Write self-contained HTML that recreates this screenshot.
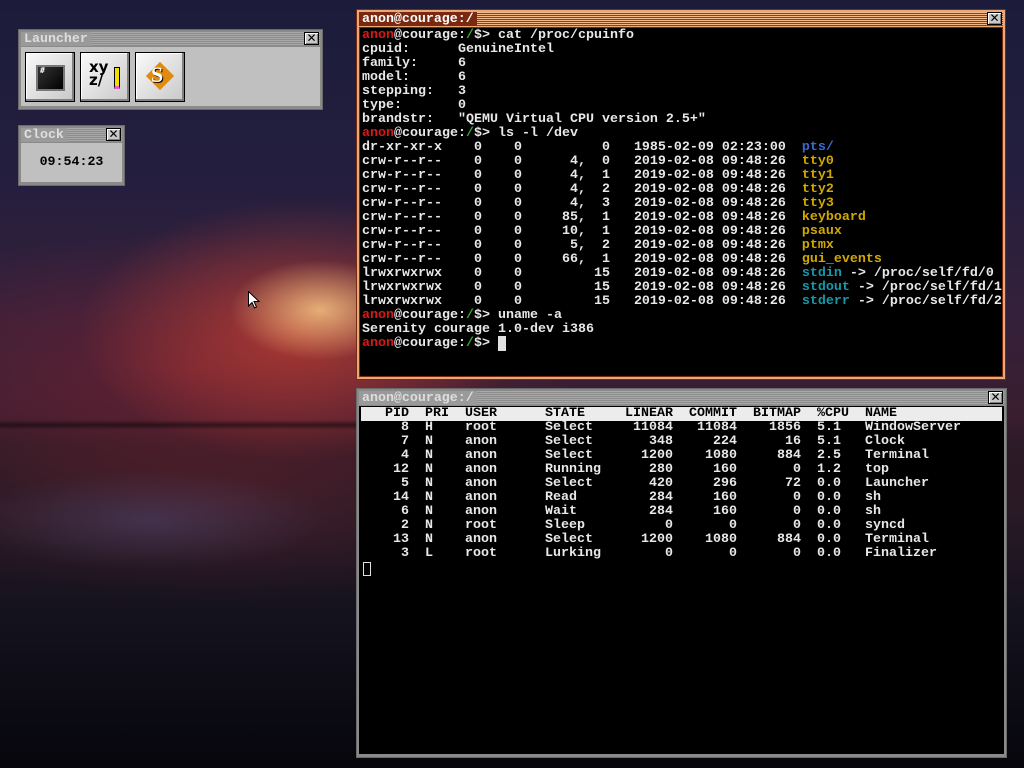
<!DOCTYPE html>
<html><head><meta charset="utf-8"><style>
*{margin:0;padding:0;box-sizing:border-box}
body{width:1024px;height:768px;overflow:hidden;position:relative;font-family:"Liberation Mono","DejaVu Sans Mono",monospace;
background:
radial-gradient(ellipse 90px 50px at 320px 310px,rgba(255,215,140,.75),rgba(255,120,60,0) 100%),
radial-gradient(ellipse 220px 130px at 300px 330px,rgba(220,70,50,.65),rgba(200,40,40,0) 100%),
radial-gradient(ellipse 380px 140px at 200px 370px,rgba(140,35,50,.5),rgba(0,0,0,0) 100%),
radial-gradient(ellipse 180px 50px at 150px 520px,rgba(90,100,160,.3),rgba(0,0,0,0) 100%),
radial-gradient(ellipse 330px 100px at 220px 500px,rgba(100,35,45,.4),rgba(0,0,0,0) 100%),
linear-gradient(180deg,#1c1c3a 0%,#241e3e 22%,#33203a 40%,#3a1e30 54%,#2c1a26 58%,#2a1a26 66%,#14121e 80%,#06060c 100%);}
.horizon{position:absolute;left:0;top:420px;width:360px;height:10px;background:linear-gradient(180deg,rgba(10,5,10,0),rgba(10,5,10,.55),rgba(30,20,30,0))}
.win{position:absolute}
.tb{position:absolute;height:14px;font-size:13.3px;line-height:14px;font-weight:bold;white-space:pre}
.close{position:absolute;width:15px;height:13px;background:#c8c8c8;border:1px solid #000;box-shadow:inset 1px 1px #fff,inset -1px -1px #808080;font:bold 12px/11px "DejaVu Sans",sans-serif;text-align:center;color:#000}
pre{font-family:"Liberation Mono","DejaVu Sans Mono",monospace;font-size:13.33px;line-height:14px;font-weight:bold;color:#e8e8e8}
.r{color:#d81818}.g{color:#30b030}.b{color:#3a6ad0}.y{color:#d0a800}.c{color:#1898a8}
.btn{position:absolute;top:52px;width:50px;height:50px;background:linear-gradient(135deg,#fafafa,#c8c8c8);border:1px solid #000;box-shadow:inset -2px -2px #808080,inset 1px 1px #fff}
.row{display:grid;grid-template-columns:48px 56px 80px 80px 48px 64px 64px 64px 1fr;height:14px;line-height:14px;font-size:13.33px;font-weight:bold;white-space:pre;color:#e8e8e8}
.row span:nth-child(1),.row span:nth-child(5),.row span:nth-child(6),.row span:nth-child(7){text-align:right}
.row span:nth-child(2),.row span:nth-child(8){padding-left:16px}
</style></head><body>
<div class="horizon"></div>

<!-- Launcher -->
<div class="win" style="left:18px;top:29px;width:305px;height:81px;background:#8a8a8a;border:1px solid #6a6a6a">
 <div style="position:absolute;left:2px;top:2px;right:2px;height:14px;background:repeating-linear-gradient(180deg,#a8a8a8 0 1px,#8c8c8c 1px 2px)"></div>
 <div class="tb" style="left:2px;top:2px;padding:0 3px;background:#9a9a9a;color:#dedede">Launcher</div>
 <div class="close" style="left:285px;top:2px">✕</div>
 <div style="position:absolute;left:2px;top:17px;right:2px;bottom:3px;background:#c0c0c0"></div>
</div>
<div class="btn" style="left:25px"><div style="position:absolute;left:10px;top:12px;width:29px;height:26px;background:linear-gradient(135deg,#333,#000);border:2px solid #777"><span style="position:absolute;left:2px;top:-1px;color:#fff;font:bold 8px monospace">#</span></div></div>
<div class="btn" style="left:80px"><span style="position:absolute;left:8px;top:8px;font:bold 15px/13px 'DejaVu Sans',sans-serif;color:#000">xy<br>z/</span><div style="position:absolute;left:33px;top:14px;width:6px;height:22px;background:#f0e000;border:1px solid #000;border-bottom:3px solid #e060d0"></div></div>
<div class="btn" style="left:135px"><div style="position:absolute;left:14px;top:13px;width:20px;height:20px;background:#e08a10;transform:rotate(45deg)"></div><span style="position:absolute;left:15px;top:9px;font:bold 22px/26px 'Liberation Serif',serif;color:#fff;text-shadow:1px 1px #000">S</span></div>

<!-- Clock -->
<div class="win" style="left:18px;top:125px;width:107px;height:61px;background:#8a8a8a;border:1px solid #6a6a6a">
 <div style="position:absolute;left:2px;top:2px;right:2px;height:14px;background:repeating-linear-gradient(180deg,#a8a8a8 0 1px,#8c8c8c 1px 2px)"></div>
 <div class="tb" style="left:2px;top:2px;padding:0 3px;background:#9a9a9a;color:#dedede">Clock</div>
 <div class="close" style="left:87px;top:2px">✕</div>
 <div style="position:absolute;left:2px;top:17px;right:2px;bottom:3px;background:#c0c0c0;text-align:center;font-size:13.3px;line-height:38px;font-weight:bold;color:#000">09:54:23</div>
</div>

<!-- Terminal -->
<div class="win" style="left:356px;top:9px;width:650px;height:371px;background:#e8a878;border:1px solid #7a2a10">
 <div style="position:absolute;left:2px;top:2px;right:2px;height:14px;background:repeating-linear-gradient(180deg,#f0b888 0 1px,#a03818 1px 2px)"></div>
 <div class="tb" style="left:2px;top:2px;padding:0 3px;background:#7a2810;color:#fff">anon@courage:/</div>
 <div class="close" style="left:630px;top:2px">✕</div>
 <div style="position:absolute;left:2px;top:17px;right:2px;bottom:2px;background:#000;border:1px solid #7a2a10;overflow:hidden">
<pre style="position:absolute;left:2px;top:1px"><span class="r">anon</span>@courage:<span class="g">/</span>$&gt; cat /proc/cpuinfo
cpuid:      GenuineIntel
family:     6
model:      6
stepping:   3
type:       0
brandstr:   "QEMU Virtual CPU version 2.5+"
<span class="r">anon</span>@courage:<span class="g">/</span>$&gt; ls -l /dev
dr-xr-xr-x    0    0          0   1985-02-09 02:23:00  <span class="b">pts/</span>
crw-r--r--    0    0      4,  0   2019-02-08 09:48:26  <span class="y">tty0</span>
crw-r--r--    0    0      4,  1   2019-02-08 09:48:26  <span class="y">tty1</span>
crw-r--r--    0    0      4,  2   2019-02-08 09:48:26  <span class="y">tty2</span>
crw-r--r--    0    0      4,  3   2019-02-08 09:48:26  <span class="y">tty3</span>
crw-r--r--    0    0     85,  1   2019-02-08 09:48:26  <span class="y">keyboard</span>
crw-r--r--    0    0     10,  1   2019-02-08 09:48:26  <span class="y">psaux</span>
crw-r--r--    0    0      5,  2   2019-02-08 09:48:26  <span class="y">ptmx</span>
crw-r--r--    0    0     66,  1   2019-02-08 09:48:26  <span class="y">gui_events</span>
lrwxrwxrwx    0    0         15   2019-02-08 09:48:26  <span class="c">stdin</span> -&gt; /proc/self/fd/0
lrwxrwxrwx    0    0         15   2019-02-08 09:48:26  <span class="c">stdout</span> -&gt; /proc/self/fd/1
lrwxrwxrwx    0    0         15   2019-02-08 09:48:26  <span class="c">stderr</span> -&gt; /proc/self/fd/2
<span class="r">anon</span>@courage:<span class="g">/</span>$&gt; uname -a
Serenity courage 1.0-dev i386
<span class="r">anon</span>@courage:<span class="g">/</span>$&gt; <span style="background:#e0e0e0">&nbsp;</span></pre>
 </div>
</div>

<!-- top -->
<div class="win" style="left:356px;top:388px;width:651px;height:370px;background:#8a8a8a;border:1px solid #6a6a6a">
 <div style="position:absolute;left:2px;top:2px;right:2px;height:14px;background:repeating-linear-gradient(180deg,#a8a8a8 0 1px,#8c8c8c 1px 2px)"></div>
 <div class="tb" style="left:2px;top:2px;padding:0 3px;background:#9a9a9a;color:#dedede">anon@courage:/</div>
 <div class="close" style="left:631px;top:2px">✕</div>
 <div style="position:absolute;left:2px;top:17px;right:2px;bottom:3px;background:#000;overflow:hidden">
  <div style="position:absolute;left:2px;top:1px;width:641px">
   <div class="row" style="background:#ececec;color:#000"><span>PID</span><span>PRI</span><span>USER</span><span>STATE</span><span>LINEAR</span><span>COMMIT</span><span>BITMAP</span><span>%CPU</span><span>NAME</span></div>
   <div class="row"><span>8</span><span>H</span><span>root</span><span>Select</span><span>11084</span><span>11084</span><span>1856</span><span>5.1</span><span>WindowServer</span></div>
   <div class="row"><span>7</span><span>N</span><span>anon</span><span>Select</span><span>348</span><span>224</span><span>16</span><span>5.1</span><span>Clock</span></div>
   <div class="row"><span>4</span><span>N</span><span>anon</span><span>Select</span><span>1200</span><span>1080</span><span>884</span><span>2.5</span><span>Terminal</span></div>
   <div class="row"><span>12</span><span>N</span><span>anon</span><span>Running</span><span>280</span><span>160</span><span>0</span><span>1.2</span><span>top</span></div>
   <div class="row"><span>5</span><span>N</span><span>anon</span><span>Select</span><span>420</span><span>296</span><span>72</span><span>0.0</span><span>Launcher</span></div>
   <div class="row"><span>14</span><span>N</span><span>anon</span><span>Read</span><span>284</span><span>160</span><span>0</span><span>0.0</span><span>sh</span></div>
   <div class="row"><span>6</span><span>N</span><span>anon</span><span>Wait</span><span>284</span><span>160</span><span>0</span><span>0.0</span><span>sh</span></div>
   <div class="row"><span>2</span><span>N</span><span>root</span><span>Sleep</span><span>0</span><span>0</span><span>0</span><span>0.0</span><span>syncd</span></div>
   <div class="row"><span>13</span><span>N</span><span>anon</span><span>Select</span><span>1200</span><span>1080</span><span>884</span><span>0.0</span><span>Terminal</span></div>
   <div class="row"><span>3</span><span>L</span><span>root</span><span>Lurking</span><span>0</span><span>0</span><span>0</span><span>0.0</span><span>Finalizer</span></div>
   <div style="margin-top:1px;margin-left:2px;width:8px;height:14px;border:1px solid #e0e0e0"></div>
  </div>
 </div>
</div>

<!-- cursor -->
<svg style="position:absolute;left:248px;top:291px" width="12" height="19" viewBox="0 0 12 19"><path d="M0.5 0.5 L0.5 15 L4 11.5 L6.5 17 L8.5 16 L6 10.5 L11 10.5 Z" fill="#fff" stroke="#000"/></svg>
</body></html>
